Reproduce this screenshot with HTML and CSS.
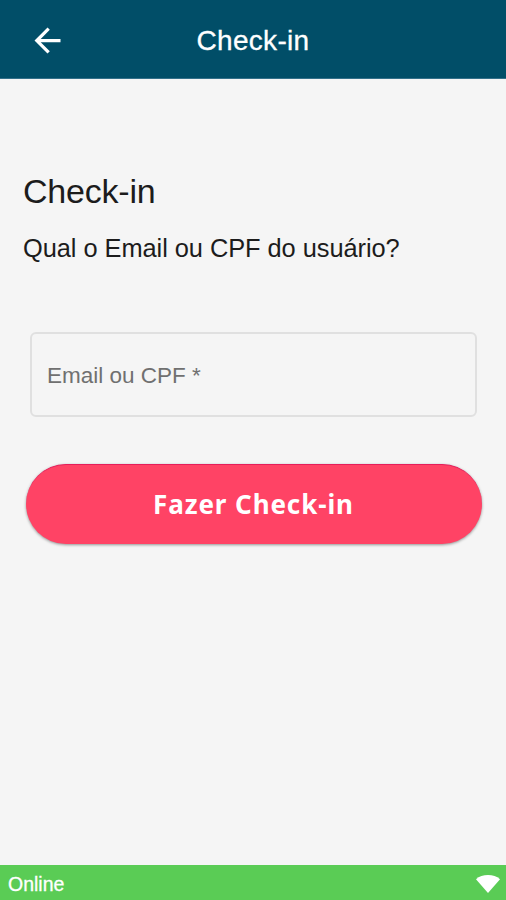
FILE: index.html
```html
<!DOCTYPE html>
<html lang="pt-BR">
<head>
<meta charset="utf-8">
<title>Check-in</title>
<link rel="stylesheet" href="styles.css">
</head>
<body>
<header class="bar">
  <svg class="back" viewBox="0 0 24 24"><path d="M20 11H7.83l5.59-5.59L12 4l-8 8 8 8 1.41-1.41L7.83 13H20v-2z"/></svg>
  <h1 class="bar-title">Check-in</h1>
</header>
<main class="content">
  <h2 class="title">Check-in</h2>
  <p class="question">Qual o Email ou CPF do usuário?</p>
  <div class="field">Email ou CPF *</div>
  <button class="submit">Fazer Check-in</button>
</main>
<footer class="status">
  <span class="online">Online</span>
  <svg class="wifi" viewBox="0 0 24 18"><path d="M0 4.3C6-1.3 18-1.3 24 4.3L12 18z"/></svg>
</footer>
</body>
</html>
```
FILE: styles.css
```css
* { box-sizing: border-box; }
body {
  margin: 0;
  height: 900px;
  display: flex;
  flex-direction: column;
  background: #f5f5f5;
  color: #1c1c1c;
  font-family: "Liberation Sans", Arial, sans-serif;
}
.bar {
  height: 79px;
  display: grid;
  grid-template-columns: 64px 1fr 64px;
  align-items: center;
  background: #014e68;
  border-bottom: 1px solid #33708a;
  color: #fff;
}
.back { width: 39px; height: 39px; margin-left: 28px; margin-top: 2px; fill: #fff; }
.bar-title { margin: 4px 0 0; font-size: 28px; font-weight: 400; line-height: 32px; letter-spacing: .3px; text-align: center; -webkit-text-stroke: .3px #fff; }
.content { flex: 1; display: flex; flex-direction: column; padding: 92px 24px 0 23px; }
.title { margin: 0; font-size: 34px; font-weight: 400; line-height: 40px; letter-spacing: -.2px; }
.question { margin: 21px 0 0; font-size: 25.4px; line-height: 32px; letter-spacing: -.05px; white-space: nowrap; }
.field {
  height: 85px;
  margin: 68px 5px 0 7px;
  padding: 2px 0 0 15px;
  display: flex;
  align-items: center;
  border: 2px solid #e0e0e0;
  border-radius: 6px;
  color: #707070;
  font-size: 22.5px;
}
.submit {
  height: 80px;
  margin: 47px 0 0 3px;
  padding: 0 1px 2px 0;
  width: 456px;
  border: 0;
  border-top: 1px solid #e61e5a;
  border-radius: 40px;
  background: #ff4365;
  color: #fff;
  font: 700 26px "Noto Sans", sans-serif;
  letter-spacing: .9px;
  box-shadow: 0 1px 3px rgba(0, 0, 0, .4);
}
.status {
  height: 35px;
  padding: 2px 6px 0 8px;
  display: flex;
  align-items: center;
  justify-content: space-between;
  background: #5acc55;
  color: #fff;
}
.online { margin-top: 1px; font-size: 19.5px; -webkit-text-stroke: .3px #fff; }
.wifi { width: 24px; height: 18px; fill: #fff; }
```
